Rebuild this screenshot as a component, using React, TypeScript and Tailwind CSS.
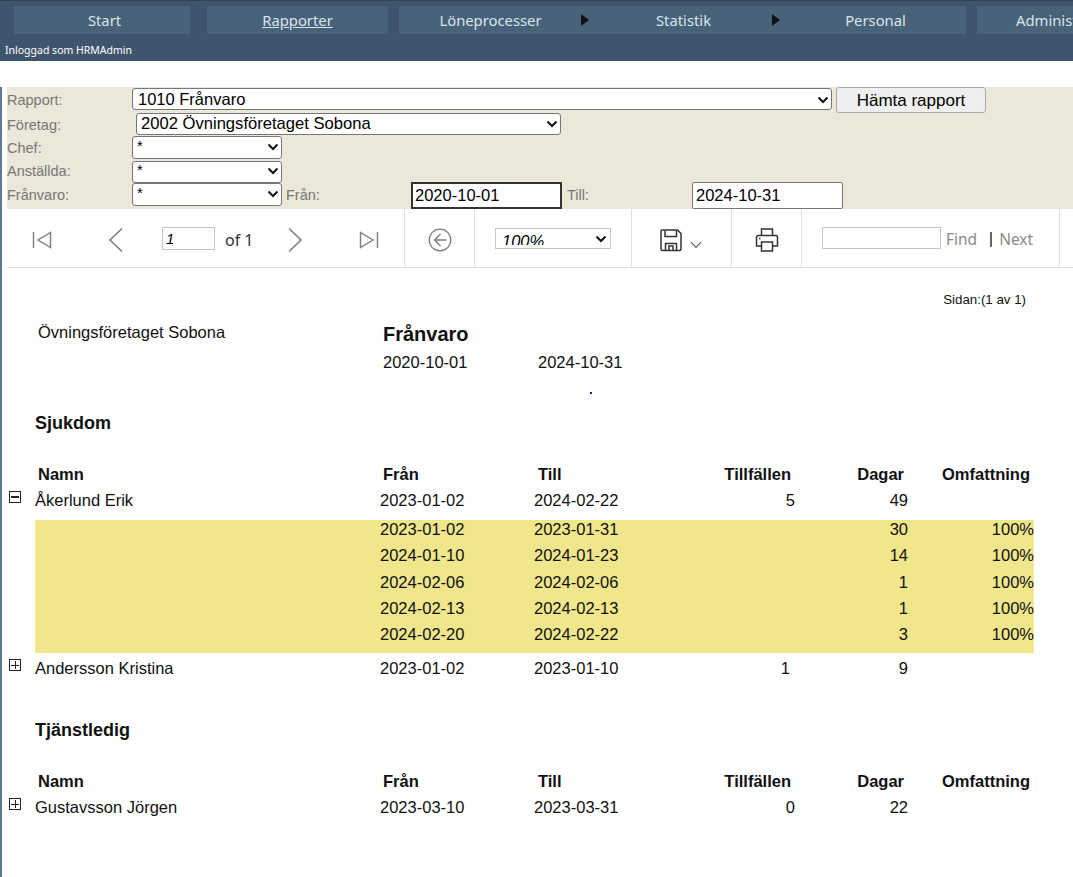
const navItems = [
  { label: 'Start', w: 'w-[176px]', mr: 'mr-[17px]', arrow: false, text: 'pl-[5px]' },
  { label: 'Rapporter', w: 'w-[181px]', mr: 'mr-[11px]', arrow: false, underline: true, text: '' },
  { label: 'Löneprocesser', w: 'w-[195px]', mr: '', arrow: true, text: 'pr-[12px]' },
  { label: 'Statistik', w: 'w-[191px]', mr: '', arrow: true, text: 'pr-[12px]' },
  { label: 'Personal', w: 'w-[181px]', mr: 'mr-[11px]', arrow: false, text: '' },
  { label: 'Administration', w: 'w-[181px]', mr: '', arrow: false, text: '' },
];

function Chevron({ className = '' }: { className?: string }) {
  return (
    <svg className={`pointer-events-none absolute ${className}`} width="12" height="8" viewBox="0 0 12 8" fill="none" stroke="#111" strokeWidth="2">
      <path d="m1.500 1.500 4.500 4.500 4.500-4.500" />
    </svg>
  );
}

function Picker({ wrap, select, text, chevron = 'right-[3px] top-[7px]' }: { wrap: string; select: string; text: string; chevron?: string }) {
  return (
    <div className={`relative shrink-0 ${wrap}`}>
      <select className={`h-full w-full appearance-none bg-white ${select}`}>
        <option>{text}</option>
      </select>
      <Chevron className={chevron} />
    </div>
  );
}

function ExpandIcon({ kind }: { kind: 'plus' | 'minus' }) {
  return (
    <div className="absolute left-[9px] top-0 flex h-[12px] w-[12px] items-center justify-center border border-[#222]">
      {kind === 'minus' ? (
        <div className="h-[2px] w-[8px] bg-[#222]" />
      ) : (
        <div className="relative h-[1px] w-[8px] bg-[#222]">
          <div className="absolute left-[3.500px] top-[-3.500px] h-[8px] w-[1px] bg-[#222]" />
        </div>
      )}
    </div>
  );
}

function PersonRow({ name, from, to, count, days, icon, className = '' }: { name: string; from: string; to: string; count: string; days: string; icon: 'plus' | 'minus'; className?: string }) {
  return (
    <div className={`relative grid grid-cols-[345px_154px_100px_161px_113px] pl-[35px] text-[16.500px] leading-[19px] text-[#111] ${className}`}>
      <ExpandIcon kind={icon} />
      <div>{name}</div>
      <div>{from}</div>
      <div>{to}</div>
      <div className={`text-right ${count === '1' ? 'pr-[5px]' : ''}`}>{count}</div>
      <div className="text-right">{days}</div>
    </div>
  );
}

function HeaderRow({ className = '' }: { className?: string }) {
  return (
    <div className={`grid grid-cols-[345px_155px_100px_153px_113px_126px] pl-[38px] text-[16.500px] font-bold leading-[19px] text-[#111] ${className}`}>
      <div>Namn</div>
      <div>Från</div>
      <div>Till</div>
      <div className="text-right">Tillfällen</div>
      <div className="text-right">Dagar</div>
      <div className="text-right">Omfattning</div>
    </div>
  );
}

const detailRows = [
  ['2023-01-02', '2023-01-31', '30'],
  ['2024-01-10', '2024-01-23', '14'],
  ['2024-02-06', '2024-02-06', '1'],
  ['2024-02-13', '2024-02-13', '1'],
  ['2024-02-20', '2024-02-22', '3'],
];

function ToolbarGroup({ w, children }: { w: string; children: React.ReactNode }) {
  return <div className={`flex h-full shrink-0 items-center border-r border-[#e0e0e0] ${w}`}>{children}</div>;
}

const iconStroke = '#7d7d7d';

export default function App() {
  return (
    <div className="min-h-[877px] overflow-hidden bg-white font-['Liberation_Sans',Arial,sans-serif] text-black">
      {/* top bar */}
      <header className="h-[61px] overflow-hidden border-t border-[#2f4358] bg-[#3f556e] font-['Noto_Sans','Open_Sans',sans-serif]">
        <nav className="flex w-[1100px] pl-[14px] pt-[5px]">
          {navItems.map(item => (
            <div
              key={item.label}
              className={`relative flex h-[28px] shrink-0 items-center justify-center bg-[#48627a] text-[14.800px] text-[#dbe4ea] ${item.w} ${item.mr} ${item.text} ${item.underline ? 'underline' : ''}`}
            >
              {item.label}
              {item.arrow && (
                <div className="absolute right-[5px] top-[8px] h-0 w-0 border-y-[6px] border-l-[8px] border-y-transparent border-l-[#111]" />
              )}
            </div>
          ))}
        </nav>
        <div className="pl-[5px] pt-[9px] text-[10.500px] leading-[14px] text-white">Inloggad som HRMAdmin</div>
      </header>

      <div className="min-h-[816px] border-l-2 border-[#5b7b96] pl-[5px]">
        {/* filter form */}
        <section className="mt-[26px] h-[122px] bg-[#ebe7d9] text-[14.500px] text-[#777]">
          <div className="flex h-[26px] items-start">
            <label className="w-[125px] pt-[3px]">Rapport:</label>
            <Picker
              wrap="mt-[1px] h-[22px] w-[700px]"
              select="rounded-[3px] border border-[#767676] pl-[5px] text-[16.500px] leading-[18px] text-black"
              text="1010 Frånvaro"
              chevron="right-[3px] top-[8px]"
            />
            <button className="ml-[4px] h-[26px] w-[150px] rounded-[3px] border border-[#a8a8a8] bg-[#efefef] text-[17px] text-black">
              Hämta rapport
            </button>
          </div>
          <div className="flex h-[23px] items-start">
            <label className="w-[129px] pt-[2px]">Företag:</label>
            <Picker
              wrap="h-[22px] w-[425px]"
              select="rounded-[3px] border border-[#767676] pl-[4px] text-[16.600px] leading-[18px] text-black"
              text="2002 Övningsföretaget Sobona"
            />
          </div>
          <div className="flex h-[24px] items-start">
            <label className="w-[125px] pt-[2px]">Chef:</label>
            <Picker
              wrap="h-[23px] w-[150px]"
              select="rounded-[3px] border border-[#767676] pb-[3px] pl-[4px] text-[14.500px] leading-[14px] text-black"
              text="*"
            />
          </div>
          <div className="flex h-[23px] items-start">
            <label className="w-[125px] pt-[1px]">Anställda:</label>
            <Picker
              wrap="h-[22px] w-[150px]"
              select="rounded-[3px] border border-[#767676] pb-[3px] pl-[4px] text-[14.500px] leading-[14px] text-black"
              text="*"
            />
          </div>
          <div className="flex h-[26px] items-start">
            <label className="w-[125px] pt-[2px]">Frånvaro:</label>
            <Picker
              wrap="h-[23px] w-[150px]"
              select="rounded-[3px] border border-[#767676] pb-[3px] pl-[4px] text-[14.500px] leading-[14px] text-black"
              text="*"
            />
            <label className="ml-[4px] w-[125px] pt-[2px]">Från:</label>
            <input
              readOnly
              value="2020-10-01"
              className="mt-[-1px] h-[27px] w-[151px] border-2 border-[#333] bg-white pl-[2px] text-[16.500px] text-black outline-none"
            />
            <label className="ml-[5px] w-[125px] pt-[2px]">Till:</label>
            <input
              readOnly
              value="2024-10-31"
              className="mt-[-1px] h-[27px] w-[151px] rounded-[2px] border border-[#767676] bg-white pl-[3px] text-[16.500px] text-black outline-none"
            />
          </div>
        </section>

        {/* report viewer toolbar */}
        <section className="flex h-[59px] items-center border-b border-[#e0e0e0] font-['Noto_Sans','Open_Sans',sans-serif]">
          <ToolbarGroup w="w-[398px]">
            <svg className="ml-[25px] mt-[4px] shrink-0" width="20" height="20" viewBox="0 0 20 20" fill="none" stroke={iconStroke} strokeWidth="1.400">
              <path d="M1.500 2v16M18.500 2.500v15L6 10z" />
            </svg>
            <svg className="ml-[56px] mt-[4px] shrink-0" width="16" height="26" viewBox="0 0 16 26" fill="none" stroke={iconStroke} strokeWidth="1.600">
              <path d="M14 1.500 2 13l12 11.500" />
            </svg>
            <input
              readOnly
              value="1"
              className="ml-[38px] h-[23px] w-[53px] border border-[#c4c4c4] pl-[3px] font-['Liberation_Sans',sans-serif] text-[15px] italic text-black outline-none"
            />
            <span className="ml-[10px] mt-[3px] text-[16px] text-[#333]">of 1</span>
            <svg className="ml-[33px] mt-[4px] shrink-0" width="16" height="26" viewBox="0 0 16 26" fill="none" stroke={iconStroke} strokeWidth="1.600">
              <path d="m2 1.500 12 11.500L2 24.500" />
            </svg>
            <svg className="ml-[56px] mt-[4px] shrink-0" width="20" height="20" viewBox="0 0 20 20" fill="none" stroke={iconStroke} strokeWidth="1.400">
              <path d="M18.500 2v16M1.500 2.500v15L14 10z" />
            </svg>
          </ToolbarGroup>
          <ToolbarGroup w="w-[70px]">
            <svg className="ml-[23px] mt-[4px]" width="24" height="24" viewBox="0 0 24 24" fill="none" stroke={iconStroke} strokeWidth="1.300">
              <circle cx="12" cy="12" r="10.800" />
              <path d="M12.500 6 6.500 12l6 6M6.500 12h12" />
            </svg>
          </ToolbarGroup>
          <ToolbarGroup w="w-[157px]">
            <Picker
              wrap="ml-[20px] mt-[1px] h-[21px] w-[116px]"
              select="border border-[#c4c4c4] pb-[3px] pl-[6px] font-['Liberation_Sans',sans-serif] text-[16.500px] italic text-black outline-none"
              text="100%"
              chevron="right-[4px] top-[7px]"
            />
          </ToolbarGroup>
          <ToolbarGroup w="w-[100px]">
            <svg className="ml-[28px] mt-[4px]" width="22" height="23" viewBox="0 0 22 23" fill="none" stroke="#333" strokeWidth="1.500">
              <path d="M1.500 1h16l3.500 3.500V20a1.500 1.500 0 0 1-1.500 1.500H2.500A1.500 1.500 0 0 1 1 20V2.500z" />
              <path d="M5 1.500v6h11.500v-6M5.500 21.500v-7h11v7M9 21v-4h4v4" />
            </svg>
            <svg className="ml-[8px] mt-[14px]" width="12" height="8" viewBox="0 0 12 8" fill="none" stroke="#444" strokeWidth="1.100">
              <path d="m1 1 5 5.500L11 1" />
            </svg>
          </ToolbarGroup>
          <ToolbarGroup w="w-[70px]">
            <svg className="ml-[23px] mt-[4px]" width="24" height="24" viewBox="0 0 24 24" fill="none" stroke="#333" strokeWidth="1.500">
              <path d="M6.500 7.500V1h11v6.500M6 18H1.500V9A1.500 1.500 0 0 1 3 7.500h18A1.500 1.500 0 0 1 22.500 9v9H18" />
              <path d="M6.500 14h11v9h-11z" />
              <path d="M4 10.500h1.500" />
            </svg>
          </ToolbarGroup>
          <ToolbarGroup w="w-[258px]">
            <input readOnly className="ml-[20px] h-[22px] w-[119px] border border-[#c4c4c4] bg-white outline-none" />
            <span className="ml-[5px] mt-[3px] text-[15.500px] text-[#8a8a8a]">Find</span>
            <span className="ml-[13px] mt-[3px] h-[15px] w-[2px] bg-[#666]" />
            <span className="ml-[7px] mt-[3px] text-[15.500px] text-[#8a8a8a]">Next</span>
          </ToolbarGroup>
        </section>

        {/* report */}
        <main className="ml-[-7px]">
          <div className="pr-[47px] pt-[25px] text-right text-[13.300px] leading-[14px] text-[#111]">Sidan:(1 av 1)</div>

          <div className="mt-[16px] flex">
            <div className="w-[383px] pl-[38px] text-[16.500px] leading-[19px] text-[#111]">Övningsföretaget Sobona</div>
            <div>
              <div className="text-[20px] font-bold leading-[23px] text-[#111]">Frånvaro</div>
              <div className="mt-[7px] flex text-[16.500px] leading-[19px] text-[#111]">
                <div className="w-[155px]">2020-10-01</div>
                <div>2024-10-31</div>
              </div>
            </div>
          </div>

          <div className="ml-[590px] mt-[20px] h-[2px] w-[2px] bg-[#1a1a9c]" />

          <h2 className="mt-[19px] pl-[35px] text-[18px] font-bold leading-[21px] text-[#111]">Sjukdom</h2>
          <HeaderRow className="mt-[31px]" />
          <PersonRow className="mt-[7px]" name="Åkerlund Erik" from="2023-01-02" to="2024-02-22" count="5" days="49" icon="minus" />

          <div className="ml-[35px] mt-[10px] w-[999px] bg-[#f0e68c] pb-[2px] text-[16.500px] leading-[19px] text-[#111]">
            {detailRows.map(r => (
              <div key={r[0]} className="grid h-[26.250px] grid-cols-[345px_154px_374px_126px]">
                <div />
                <div>{r[0]}</div>
                <div className="relative">
                  {r[1]}
                  <span className="absolute right-0 top-0">{r[2]}</span>
                </div>
                <div className="text-right">100%</div>
              </div>
            ))}
          </div>

          <PersonRow className="mt-[6px]" name="Andersson Kristina" from="2023-01-02" to="2023-01-10" count="1" days="9" icon="plus" />

          <h2 className="mt-[42px] pl-[35px] text-[18px] font-bold leading-[21px] text-[#111]">Tjänstledig</h2>
          <HeaderRow className="mt-[31px]" />
          <PersonRow className="mt-[7px]" name="Gustavsson Jörgen" from="2023-03-10" to="2023-03-31" count="0" days="22" icon="plus" />
        </main>
      </div>
    </div>
  );
}
